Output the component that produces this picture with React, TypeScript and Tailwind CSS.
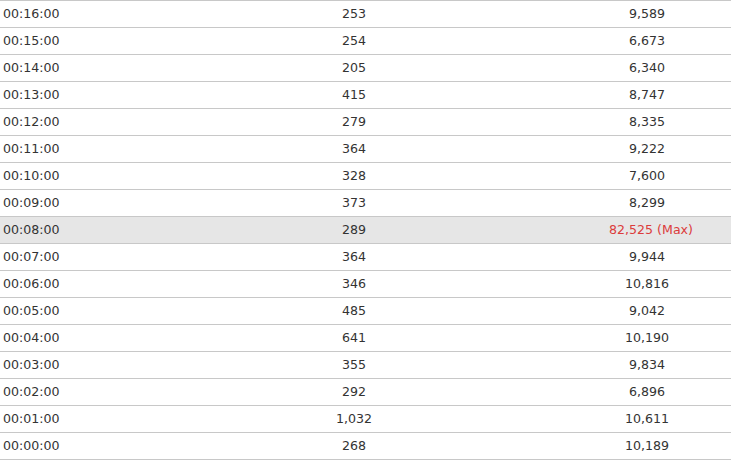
const rows: [string, string, string, boolean?][] = [
  ["00:16:00", "253", "9,589"],
  ["00:15:00", "254", "6,673"],
  ["00:14:00", "205", "6,340"],
  ["00:13:00", "415", "8,747"],
  ["00:12:00", "279", "8,335"],
  ["00:11:00", "364", "9,222"],
  ["00:10:00", "328", "7,600"],
  ["00:09:00", "373", "8,299"],
  ["00:08:00", "289", "82,525 (Max)", true],
  ["00:07:00", "364", "9,944"],
  ["00:06:00", "346", "10,816"],
  ["00:05:00", "485", "9,042"],
  ["00:04:00", "641", "10,190"],
  ["00:03:00", "355", "9,834"],
  ["00:02:00", "292", "6,896"],
  ["00:01:00", "1,032", "10,611"],
  ["00:00:00", "268", "10,189"],
];

export default function App() {
  return (
    <div className="w-[731px] h-[463px] bg-white overflow-hidden font-['Verdana','DejaVu_Sans',sans-serif] text-[12.6px] text-[#333]">
      <div className="border-b border-[#c8c8c8]">
        {rows.map(([time, count, value, max]) => (
          <div
            key={time}
            className={`grid grid-cols-[145px_418px_168px] h-[27px] items-center border-t border-[#c8c8c8] ${
              max ? "bg-[#e6e6e6]" : ""
            }`}
          >
            <span className="pl-[3px]">{time}</span>
            <span className="text-center">{count}</span>
            <span className={`text-center ${max ? "text-[#dc3c3c] pl-[8px]" : ""}`}>{value}</span>
          </div>
        ))}
      </div>
    </div>
  );
}
